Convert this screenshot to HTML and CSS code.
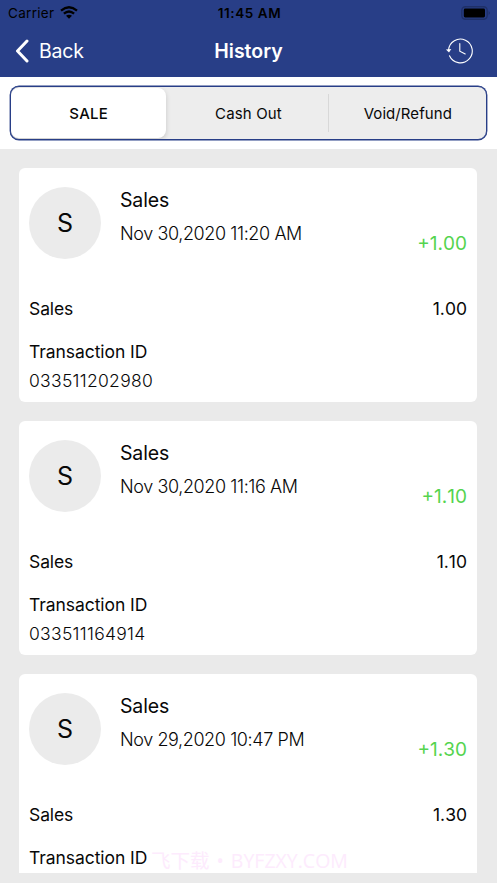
FILE: index.html
```html
<!DOCTYPE html>
<html lang="en">
<head>
<meta charset="utf-8">
<title>History</title>
<link rel="stylesheet" href="styles.css">
</head>
<body>
<header class="top">
  <div class="status">
    <div class="carrier"><span class="carrier-name">Carrier</span>
      <svg class="wifi" width="18" height="13" viewBox="0 0 18 13"><g fill="none" stroke="#000" stroke-width="2.3"><path d="M1 4.6Q9-2 17 4.6"/><path d="M3.9 7.7Q9 3.3 14.1 7.7"/></g><path d="M6 9.8Q9 7.6 12 9.8L9 12.8Z"/></svg>
    </div>
    <div class="clock">11:45 AM</div>
    <svg class="battery" width="30" height="14" viewBox="0 0 30 14"><rect x=".8" y=".8" width="25.4" height="12.4" rx="3.6" fill="none" stroke="#1f3068" stroke-width="1.4"/><rect x="2.8" y="2.5" width="21.2" height="9" rx="1.4"/><path d="M27.8 4.7Q29.4 7 27.8 9.3Z" fill="#17244f"/></svg>
  </div>
  <nav class="nav">
    <div class="back"><svg width="14" height="24" viewBox="0 0 14 24"><path d="M12 2L2.5 12L12 22" fill="none" stroke="#fff" stroke-width="3" stroke-linecap="round" stroke-linejoin="round"/></svg><span class="back-text">Back</span></div>
    <h1 class="title">History</h1>
    <svg class="history" width="28" height="26" viewBox="0 0 28 26"><g fill="none" stroke="#fff" stroke-width="1.1" stroke-linecap="round"><path d="M3.5 12A11.9 11.9 0 1 1 4.5 17.8"/><path d="M14.8 5.5V13.2L20.2 16"/></g><path d="M.9 11.5L6.3 11L4 14.4Z" fill="#fff"/></svg>
  </nav>
</header>
<section class="tabs-area">
  <div class="tabs">
    <div class="tab tab-active"><span class="tab-sale">SALE</span></div>
    <div class="tab"><span class="tab-cash">Cash Out</span></div>
    <div class="tab tab-ruled"><span class="tab-void">Void/Refund</span></div>
  </div>
</section>
<main class="list">
  <article class="card">
    <div class="head"><div class="avatar">S</div><div class="info"><div class="name">Sales</div><div class="date">Nov 30,2020 11:20 AM</div></div><div class="amount">+1.00</div></div>
    <div class="row"><span class="label">Sales</span><span class="value">1.00</span></div>
    <div class="tid-label">Transaction ID</div>
    <div class="tid">033511202980</div>
  </article>
  <article class="card">
    <div class="head"><div class="avatar">S</div><div class="info"><div class="name">Sales</div><div class="date">Nov 30,2020 11:16 AM</div></div><div class="amount">+1.10</div></div>
    <div class="row"><span class="label">Sales</span><span class="value">1.10</span></div>
    <div class="tid-label">Transaction ID</div>
    <div class="tid">033511164914</div>
  </article>
  <article class="card card-cut">
    <div class="head"><div class="avatar">S</div><div class="info"><div class="name">Sales</div><div class="date">Nov 29,2020 10:47 PM</div></div><div class="amount">+1.30</div></div>
    <div class="row"><span class="label">Sales</span><span class="value">1.30</span></div>
    <div class="tid-label">Transaction ID</div>
  </article>
</main>
<div class="mark"><span>飞下载</span><span>•</span><span>BYFZXY.COM</span></div>
</body>
</html>
```

FILE: styles.css
```css
* { box-sizing: border-box; }
body {
  margin: 0;
  width: 497px;
  height: 883px;
  overflow: hidden;
  position: relative;
  background: #eaeaea;
  color: #080808;
  font-family: Inter, "Noto Sans CJK SC", sans-serif;
  white-space: nowrap;
}
svg { display: block; flex: none; }
.top { height: 77px; background: #283e87; }
.status {
  height: 25px;
  padding: 0 6px 0 8px;
  display: grid;
  grid-template-columns: 1fr auto 1fr;
  align-items: center;
  color: #000;
}
.carrier { display: flex; align-items: center; gap: 6px; font-size: 13.5px; letter-spacing: 0.3px; }
.wifi { margin-top: -1px; }
.clock { font-size: 13.5px; font-weight: 600; letter-spacing: 0.6px; font-kerning: none; }
.battery { justify-self: end; }
.nav {
  height: 52px;
  padding: 0 24px 0 15px;
  display: grid;
  grid-template-columns: 1fr auto 1fr;
  align-items: center;
  color: #fff;
}
.back { display: flex; align-items: center; gap: 10px; font-size: 19.5px; letter-spacing: -0.2px; }
.title { margin: 0 0 0 9px; font-size: 19.5px; font-weight: 600; letter-spacing: 0; }
.history { justify-self: end; }
.tabs-area { height: 72px; padding: 9px 10px; background: #fff; }
.tabs {
  height: 54px;
  display: grid;
  grid-template-columns: 1fr 1fr 1fr;
  border: 1px solid #283e87;
  border-radius: 9px;
  box-shadow: 0 0 0 0.4px #283e87;
  background: #ededed;
  overflow: hidden;
}
.tab {
  display: flex;
  align-items: center;
  justify-content: center;
  position: relative;
  font-size: 15px;
}
.tab-active {
  margin: 1px 3px 1px 0;
  border-radius: 8px;
  background: #fff;
  box-shadow: 0 2px 5px rgba(0, 0, 0, 0.16);
  font-weight: 500;
  letter-spacing: 0.2px;
}
.tab-cash { letter-spacing: 0.15px; }
.tab-void { letter-spacing: 0.08px; margin-left: 2px; }
.tab-ruled::before {
  content: "";
  position: absolute;
  left: 0;
  top: 7px;
  bottom: 7px;
  width: 1px;
  background: #d8d8d8;
}
.list { padding: 19px 20px 0 19px; display: grid; gap: 19px; }
.card { height: 234px; padding: 0 10px; border-radius: 6px; background: #fff; }
.card-cut { height: 199px; border-radius: 6px 6px 0 0; }
.head { height: 127px; padding-top: 19px; display: flex; }
.avatar {
  width: 72px;
  height: 72px;
  border-radius: 50%;
  background: #ebebeb;
  display: flex;
  align-items: center;
  justify-content: center;
  font-size: 25px;
}
.info { flex: 1; margin-left: 19px; }
.name { margin-top: -1px; font-size: 19.5px; line-height: 28px; letter-spacing: -0.15px; }
.date { margin-top: 6px; font-size: 18px; line-height: 28px; font-weight: 300; letter-spacing: -0.4px; }
.amount { margin-top: 43px; font-size: 19px; line-height: 28px; color: #55d44f; font-kerning: none; }
.row { height: 28px; display: flex; justify-content: space-between; font-size: 17.5px; line-height: 28px; }
.label { letter-spacing: -0.1px; }
.value { font-kerning: none; }
.tid-label { margin-top: 15px; font-size: 17.5px; line-height: 28px; letter-spacing: -0.07px; }
.tid { margin-top: 1px; font-size: 17.5px; line-height: 28px; font-weight: 300; font-kerning: none; letter-spacing: 0.3px; }
.mark {
  position: absolute;
  left: 151px;
  top: 847px;
  display: flex;
  gap: 7px;
  font-family: "Open Sans", "Noto Sans CJK SC", sans-serif;
  font-size: 19.5px;
  line-height: 28px;
  color: #fdebfd;
}
```
